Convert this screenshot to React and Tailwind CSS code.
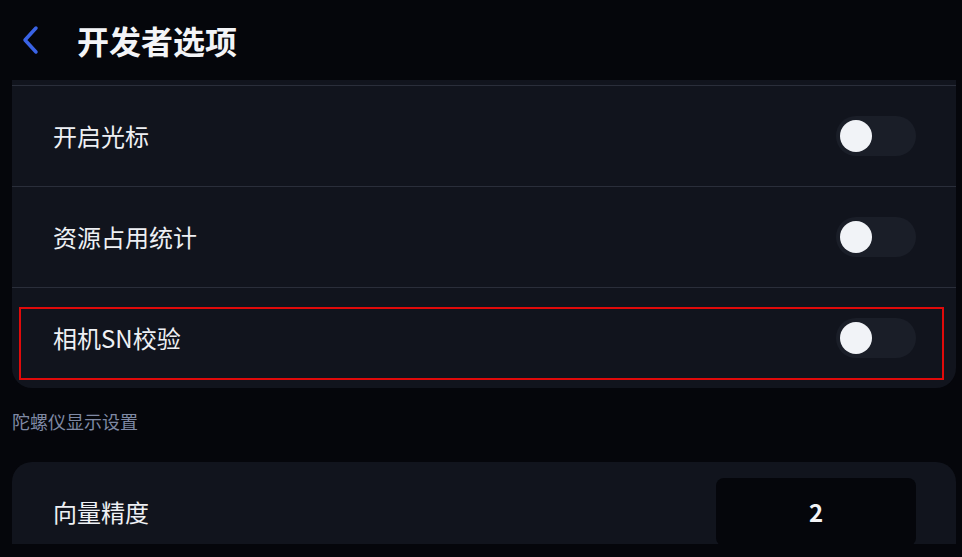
import React from "react";

const font = { fontFamily: '"Noto Sans CJK SC", "Noto Sans", sans-serif' };

function Toggle() {
  return (
    <div className="w-[80px] h-[40px] rounded-full bg-[#1a1e28] flex items-center pl-[4px]">
      <div className="w-[32px] h-[32px] rounded-full bg-[#f1f3f7]" />
    </div>
  );
}

function Row({ label, children, highlight, border = true }) {
  return (
    <div className={`relative h-[101px] flex items-center justify-between pl-[41px] pr-[40px] ${border ? "border-t border-[#2a2e3a]" : ""}`}>
      <span className="text-[24px] leading-[32px] text-[#eef0f4]">{label}</span>
      {children}
      {highlight && (
        <div className="absolute left-[7px] right-[12px] top-[19px] bottom-[8px] border-2 border-[#e00a0a] pointer-events-none" />
      )}
    </div>
  );
}

export default function App() {
  return (
    <div className="w-[962px] h-[557px] bg-[#05060b] overflow-hidden flex flex-col" style={font}>
      <div className="h-[80px] flex items-center shrink-0">
        <svg width="24" height="32" viewBox="0 0 24 32" className="ml-[20px]" fill="none">
          <path d="M16 4 L5 16 L16 28" stroke="#3a63e6" strokeWidth="3.5" strokeLinecap="round" strokeLinejoin="round" />
        </svg>
        <span className="ml-[33px] text-[32px] leading-[40px] font-bold text-[#f3f4f7]">开发者选项</span>
      </div>
      <div className="h-[464px] overflow-hidden pl-[12px] pr-[6px] shrink-0">
        <div className="bg-[#11141d] rounded-b-[20px] pt-[5px]">
          <Row label="开启光标"><Toggle /></Row>
          <Row label="资源占用统计"><Toggle /></Row>
          <Row label="相机SN校验" highlight><Toggle /></Row>
        </div>
        <div className="pt-[20px] pb-[28px] text-[18px] leading-[26px] text-[#7f89a4]">陀螺仪显示设置</div>
        <div className="bg-[#11141d] rounded-t-[20px]">
          <div className="h-[100px] flex items-center justify-between pl-[41px] pr-[40px]">
            <span className="text-[24px] leading-[32px] text-[#eef0f4]">向量精度</span>
            <div className="w-[200px] h-[68px] rounded-[8px] bg-[#05060b] flex items-center justify-center">
              <span className="text-[24px] font-bold text-[#f3f4f7]">2</span>
            </div>
          </div>
        </div>
      </div>
    </div>
  );
}
